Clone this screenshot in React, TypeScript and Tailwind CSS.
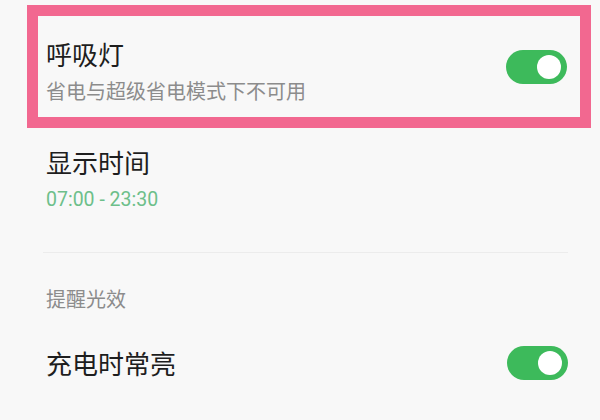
import React from 'react'

const font = { fontFamily: '"Noto Sans CJK SC", "Noto Sans", sans-serif' }

function Toggle() {
  return (
    <div className="w-[61px] h-[34px] rounded-full bg-[#3dba5b] flex items-center justify-end pr-[6px] shrink-0">
      <div className="w-[24px] h-[24px] rounded-full bg-white" />
    </div>
  )
}

export default function App() {
  return (
    <div
      className="w-[600px] h-[420px] overflow-hidden bg-[#f8f8f8] pl-[27px] pr-[9px] pt-[5px]"
      style={font}
    >
      {/* 呼吸灯 - highlighted */}
      <div className="h-[123px] border-[11px] border-[#f26890] flex items-center justify-between pl-[8px] pr-[13px]">
        <div className="flex flex-col mt-[8px]">
          <div className="text-[26px] leading-[30px] text-[#1e1e1e]">呼吸灯</div>
          <div className="text-[20px] leading-[24px] mt-[10px] text-[#8c8c8c]">省电与超级省电模式下不可用</div>
        </div>
        <Toggle />
      </div>

      {/* 显示时间 */}
      <div className="pl-[19px] pr-[23px] mt-[19px]">
        <div className="text-[26px] leading-[30px] text-[#1e1e1e]">显示时间</div>
        <div
          className="text-[19.5px] leading-[24px] mt-[11px] text-[#6dbf8a]"
          style={{ fontFamily: 'Roboto, "Noto Sans", sans-serif' }}
        >
          07:00 - 23:30
        </div>
      </div>

      <div className="h-px bg-[#ececec] ml-[16px] mr-[23px] mt-[40px]" />

      {/* 提醒光效 */}
      <div className="pl-[19px] pr-[23px] mt-[34px] text-[20px] leading-[24px] text-[#8c8c8c]">提醒光效</div>

      <div className="pl-[19px] pr-[23px] mt-[35px] flex items-center justify-between">
        <div className="text-[26px] leading-[30px] text-[#1e1e1e]">充电时常亮</div>
        <Toggle />
      </div>
    </div>
  )
}
